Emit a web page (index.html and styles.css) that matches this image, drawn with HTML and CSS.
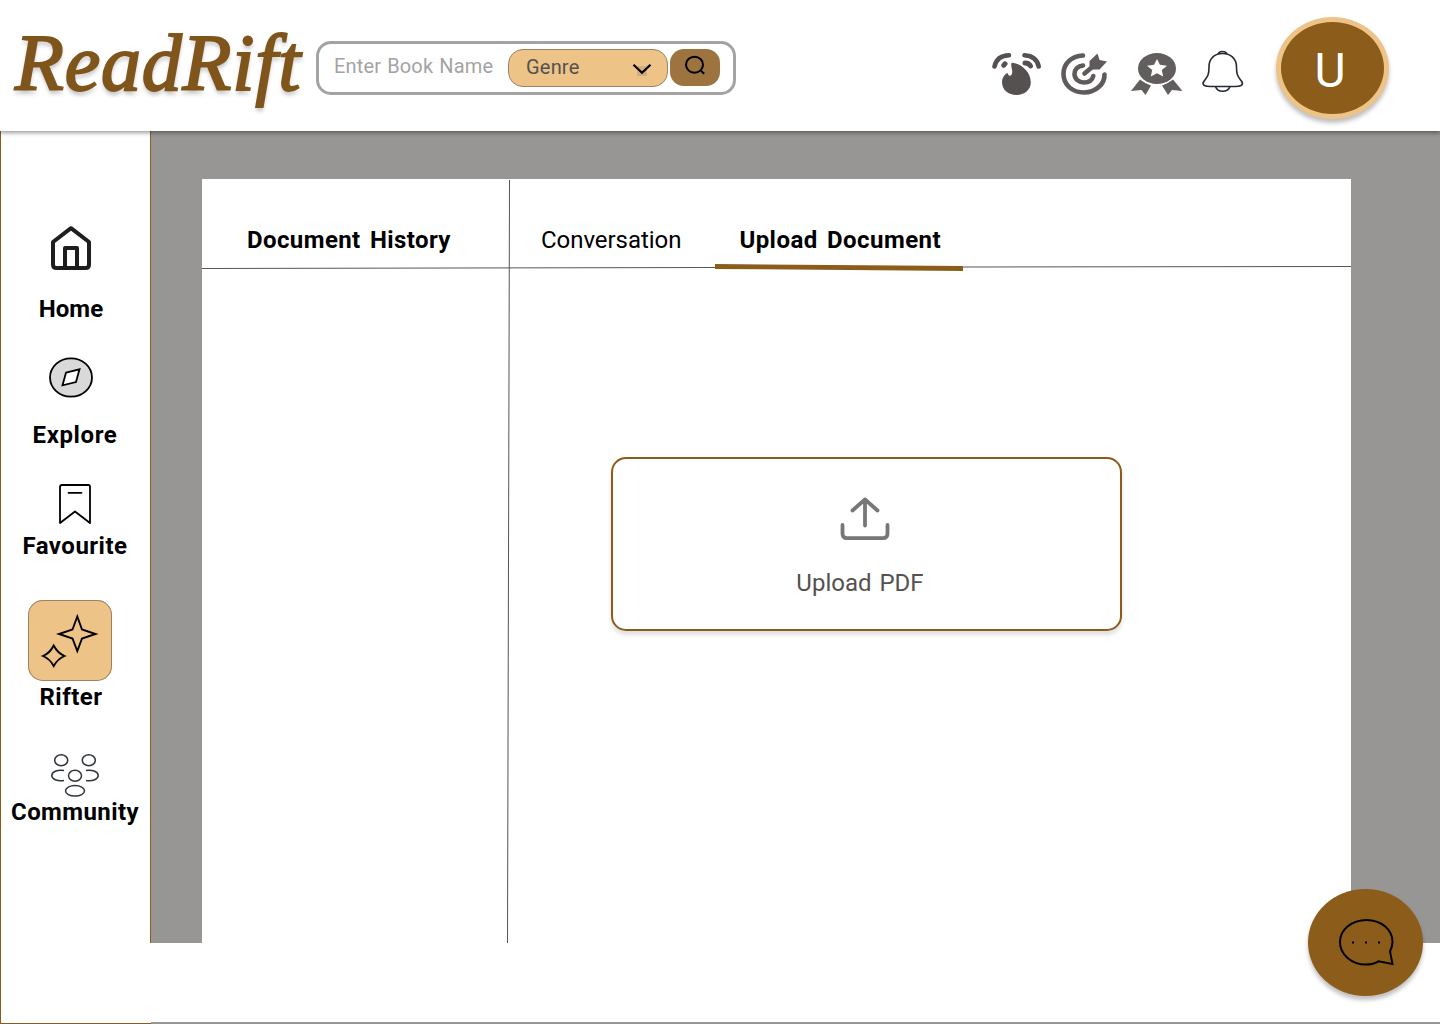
FILE: index.html
```html
<!DOCTYPE html>
<html lang="en">
<head>
<meta charset="utf-8">
<title>ReadRift</title>
<link rel="stylesheet" href="styles.css">
</head>
<body>
<header class="header">
  <div class="logo">ReadRift</div>
  <form class="search">
    <span class="search-hint">Enter Book Name</span>
    <div class="genre">
      <span>Genre</span>
      <svg class="chevron" width="20" height="13" viewBox="0 0 20 13"><rect x="5" y="3" width="10" height="10" fill="#d2ae7c"/><path d="M1.500 1.800 10 9.800 18.500 1.800" fill="none" stroke="#000" stroke-width="2.200"/></svg>
    </div>
    <div class="search-button">
      <svg width="22" height="22" viewBox="0 0 22 22" fill="none" stroke="#000" stroke-width="2"><ellipse cx="10.500" cy="9.700" rx="8.500" ry="8"/><path d="M16 15l4.200 3.700"/></svg>
    </div>
  </form>
  <div class="actions">
    <svg class="icon-streak" width="50" height="44" viewBox="0 0 50 44">
      <g fill="none" stroke="#555150" stroke-width="4.600" stroke-linecap="round"><path d="M2.500 14.500Q5 3.500 17 3.300M32.500 3.300Q44.500 4 46.700 14.500"/><path stroke-width="5" d="M11.800 13.300L13 11.800M33 11Q37 11 38.500 14"/></g>
      <path d="M20 10.700C18.500 11.500 19.500 15 20 17.500c.8 4-.5 6.300-2 6.300s-2.200-1.400-2.500-3C12 23 10 26 10 30c0 8 6.500 13 14.500 13s14.300-5.500 14.300-12.500C38.800 19 28 11.500 20 10.700z" fill="#555150"/>
    </svg>
    <svg class="icon-goal" width="48" height="44" viewBox="0 0 48 44">
      <g fill="none" stroke="#5f5b5a" stroke-width="4.600" stroke-linecap="round"><path d="M22 3.500C10 4 2.500 12 2.500 22c0 11 9 18.500 20.500 18.500s21-8.500 20.500-18"/><path d="M22 13.500c-5 .5-8.500 4-8.500 8.500 0 5 4.300 8.500 9.500 8.500 5 0 8.300-2.700 9.300-6.500"/><path d="M23.500 21.500L36 11"/></g>
      <path d="M28.500 9L36.500 1.500 38.500 8 46 9.500 38.500 17.500 32 17.500 28.500 14z" fill="#5f5b5a"/>
    </svg>
    <svg class="icon-badge" width="53" height="44" viewBox="0 0 53 44" fill="#625e5d">
      <ellipse cx="27" cy="16.500" rx="19" ry="15.500"/>
      <path d="M10 27.500Q15 31.500 21 33.500L15.500 43 11.500 38 1 39zM43 27.500Q38 31.500 32 33.500L38 43 42 38 52.500 39z"/>
      <path d="M27 7l2.900 5.700 7.100 1-5.200 4.300 1.400 6.500L27 21.300l-6.200 3.200 1.400-6.500-5.200-4.300 7.100-1z" fill="#fff"/>
    </svg>
    <svg class="icon-bell" width="44" height="44" viewBox="0 0 44 44" fill="none" stroke="#262a33" stroke-width="1.600">
      <path d="M8 17C8 8 14 3.500 21.500 3.500S35.500 8 35.500 17c0 9 1.700 9.500 5.300 14.500 2.200 4-1.800 5-6.800 5H9.500c-5 0-9-1-6.800-5C6.300 26.500 8 26 8 17z"/><path d="M17 4q1-2.500 4.500-2.500T26 4M14.500 36.500c1 3 3.500 4.800 7 4.800s6.500-1.800 7.500-4.800"/>
    </svg>
    <div class="avatar">U</div>
  </div>
</header>
<div class="body">
  <nav class="sidebar">
    <a class="item item-home">
      <svg width="40" height="44" viewBox="0 0 40 44" fill="none" stroke="#1e1e1e" stroke-width="4" stroke-linejoin="round"><path d="M2 16L20 2.200 38 16V38.500Q38 42 34.500 42H5.500Q2 42 2 38.500z"/><path d="M14 42V22H26V42"/></svg>
      <span>Home</span>
    </a>
    <a class="item item-explore">
      <svg width="44" height="41" viewBox="0 0 44 41" stroke="#000" stroke-width="1.800"><ellipse cx="22" cy="20.500" rx="21" ry="19.200" fill="#d9d9d9"/><path d="M17 15.700L30.500 12.300 27 25 13.500 28.300z" fill="#fff"/></svg>
      <span>Explore</span>
    </a>
    <a class="item item-favourite">
      <svg width="32" height="41" viewBox="0 0 32 41" fill="none" stroke="#000" stroke-width="1.800" stroke-linejoin="round" stroke-linecap="round"><path d="M1 3Q1 1 3 1H29.500Q31 1 31 3V39L16 27.500 1 39z"/><path d="M9.500 8.800h13"/></svg>
      <span>Favourite</span>
    </a>
    <a class="item item-rifter">
      <div class="tile"><svg width="84" height="81" viewBox="0 0 84 81" fill="none" stroke="#000" stroke-width="1.900"><path d="M49.300 16.500L54 29.500 67.500 34 54 38.500 49.300 51 44.500 38.500 31 34 44.500 29.500z"/><path d="M25.700 45.500Q29.500 53 36.500 56 29.500 59 25.700 66 22 59 15 56 22 53 25.700 45.500z"/></svg></div>
      <span>Rifter</span>
    </a>
    <a class="item item-community">
      <svg width="48" height="44" viewBox="0 0 48 44" fill="none" stroke="#30343d" stroke-width="1.500"><ellipse cx="10.200" cy="7.300" rx="6.500" ry="5.500"/><ellipse cx="37.800" cy="7.300" rx="6.500" ry="5.500"/><ellipse cx="24" cy="22.700" rx="6.500" ry="5.500"/><ellipse cx="24" cy="37.800" rx="9.500" ry="5.300"/><path d="M13 17.500C6 16.500.8 19 .8 22.500S6 28.500 13 27.500M35 17.500c7-1 12.200 1.500 12.200 5S42 28.500 35 27.500"/></svg>
      <span>Community</span>
    </a>
  </nav>
  <main class="main">
    <div class="workspace">
      <section class="panel">
        <svg class="rules" width="1149" height="764" viewBox="0 0 1149 764"><path d="M307.500 1L305.500 764M0 89.500L513 88.500M761 88L1149 87.500" stroke="#555" fill="none"/><path d="M513 87.500L761 89.500" stroke="#8b5c1a" stroke-width="4.800"/></svg>
        <aside class="history"><h2>Document History</h2></aside>
        <div class="document">
          <div class="tabs"><span class="tab">Conversation</span><span class="tab tab-active">Upload Document</span></div>
          <div class="upload">
            <svg width="50" height="44" viewBox="0 0 50 44" fill="none" stroke="#777" stroke-width="3.800" stroke-linecap="round" stroke-linejoin="round"><path d="M2.500 28V36.500Q2.500 41.200 7 41.200H43Q47.500 41.200 47.500 36.500V28M25 28.500V2.500M12.500 13.500L25 2.500 37.500 13.500"/></svg>
            <span>Upload PDF</span>
          </div>
        </div>
      </section>
    </div>
  </main>
</div>
<button class="chat"><svg width="57" height="49" viewBox="0 0 57 49" fill="none" stroke="#000" stroke-width="2"><path d="M52 33.500C54 29.500 54.500 27 54.500 24 54.500 11.500 43 2 28.500 2S2 11.500 2 24s11.500 22.500 26 22.500c5 0 9-1 12.500-3.200L54.500 46z"/><path d="M14 24.500h2M27 24.500h2M40 24.500h2"/></svg></button>
</body>
</html>
```
FILE: styles.css
```css
* { box-sizing: border-box; }
body { margin: 0; height: 1024px; overflow: hidden; background: #fff; color: #000; font-family: Roboto, sans-serif; }
svg { display: block; flex: none; }

.header { position: relative; display: flex; align-items: flex-start; height: 131px; padding-left: 13px; background: #fff; box-shadow: 0 2px 4px rgba(0, 0, 0, .38); }
.logo { width: 303px; padding: 19px 0 0 2px; font: italic 80px/88px "Liberation Serif", serif; letter-spacing: .8px; color: #7f551b; -webkit-text-stroke: 2px #7f551b; text-shadow: 0 4px 4px rgba(0, 0, 0, .25); white-space: nowrap; }

.search { display: flex; flex: none; width: 420px; height: 54px; margin-top: 41px; padding: 5px 0 0 15px; border: 3px solid #a3a3a3; border-radius: 15px; font-size: 20px; }
.search-hint { width: 174px; line-height: 35px; color: #a3a3a3; letter-spacing: .15px; word-spacing: 1px; }
.genre { display: flex; justify-content: space-between; width: 160px; height: 38px; padding: 0 15px 0 17px; border: 1px solid #9b8262; border-radius: 15px; background: #edc388; line-height: 34px; letter-spacing: .2px; color: #555150; }
.chevron { margin-top: 13px; }
.search-button { width: 50px; height: 37px; margin-left: 2px; padding: 6px 0 0 14px; border-radius: 14px; background: #9d743f; }

.actions { display: flex; margin-left: 256px; }
.icon-streak, .icon-goal, .icon-badge { margin-top: 52px; }
.icon-goal { margin-left: 19px; }
.icon-badge { margin-left: 21px; }
.icon-bell { margin: 50px 0 0 18px; }
.avatar { width: 113px; height: 102px; margin: 17px 0 0 31px; padding-right: 5px; border: 5px solid #edc388; border-radius: 50%; background: #8b5c1a; box-shadow: 0 4px 4px rgba(0, 0, 0, .25); color: #fff; font-size: 48px; line-height: 98px; text-align: center; }

.body { display: flex; height: 893px; }
.sidebar { width: 151px; padding-right: 2px; border: 1px solid #8b5c1a; border-width: 0 0 1px 1px; }
.item { display: flex; flex-direction: column; align-items: center; font-size: 24px; font-weight: 700; line-height: 28px; }
.item-home { margin: 95px 8px 0 0; gap: 25px; letter-spacing: .1px; }
.item-explore { margin-top: 34px; gap: 23px; letter-spacing: .6px; }
.item-explore svg { margin-right: 8px; }
.item-favourite { margin-top: 35px; gap: 7px; letter-spacing: .5px; }
.item-rifter { margin: 40px 10px 0 0; gap: 2px; letter-spacing: .5px; }
.item-rifter span { margin-left: 2px; }
.item-community { margin-top: 42px; gap: 1px; letter-spacing: .4px; }
.tile { width: 84px; height: 81px; border-radius: 15px; background: #edc388; box-shadow: inset 0 0 0 1px #9b8262; }

.main { flex: 1; border-bottom: 2px solid #989694; }
.workspace { height: 812px; padding: 48px 0 0 51px; border-left: 1px solid #8b5c1a; margin-left: -1px; background: #989694; }
.panel { position: relative; display: flex; width: 1149px; height: 764px; background: #fff; }
.rules { position: absolute; inset: 0; }
.history { width: 307px; padding: 47px 0 0 45px; }
.history h2 { margin: 0; font-size: 24px; line-height: 28px; letter-spacing: .4px; word-spacing: 3px; white-space: nowrap; }
.document { flex: 1; padding-top: 47px; }
.tabs { display: flex; gap: 58px; padding-left: 32px; font-size: 24px; line-height: 28px; }
.tab { letter-spacing: -.05px; }
.tab-active { font-weight: 700; letter-spacing: .45px; word-spacing: 3px; }
.upload { display: flex; flex-direction: column; align-items: center; gap: 28px; width: 511px; height: 174px; margin: 203px 0 0 102px; padding: 38px 4px 0 0; border: 2px solid #8b5c1a; border-radius: 15px; box-shadow: 0 4px 4px rgba(0, 0, 0, .12); font-size: 24px; line-height: 28px; color: #555150; word-spacing: 2px; }
.upload span { margin-right: 9px; }
.chat { position: absolute; left: 1308px; top: 889px; width: 115px; height: 107px; padding: 0 0 1px 30px; border: 0; border-radius: 50%; background: #8b5c1a; box-shadow: 0 4px 4px rgba(0, 0, 0, .25); }
```
